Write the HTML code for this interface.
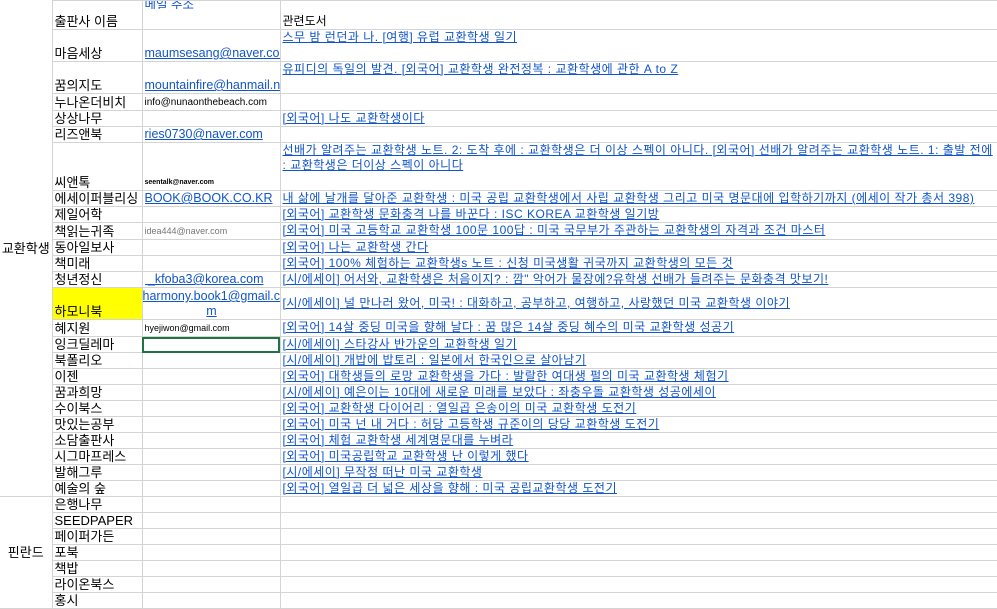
<!DOCTYPE html>
<html><head><meta charset="utf-8">
<style>
body{margin:0;background:#fff;width:997px;height:609px;overflow:hidden;font-family:"Liberation Sans","Noto Sans CJK KR",sans-serif;font-size:12px;color:#000}
table{border-collapse:collapse;table-layout:fixed;position:absolute;left:0;top:0;width:997px}
td{border:1px solid #d4d4d4;padding:0 0 0 2px;line-height:15px;vertical-align:bottom;white-space:nowrap;overflow:hidden}
td.a{border-left:none;text-align:center;vertical-align:middle;font-size:13px;padding:0}
td.b{font-size:13px}
td.d{vertical-align:top;overflow:visible;letter-spacing:0.5px}
.c{width:136px;overflow:hidden;white-space:nowrap}
a{color:#1155cc;text-decoration:underline}
.e{font-size:12.5px}
.s{font-size:10px}
.t{font-size:7px;font-weight:bold}
.g{font-size:9px;color:#777}
tr.r16{height:16px}
</style></head><body>
<table>
<colgroup><col style="width:52px"><col style="width:90px"><col style="width:138px"><col style="width:717px"></colgroup>
<tr style="height:29px"><td class="a" rowspan="25" style="border-top:none">교환학생</td><td class="b">출판사 이름</td><td style="vertical-align:top;line-height:8px"><div class="c"><a class="e">메일 주소</a></div></td><td style="vertical-align:bottom">관련도서</td></tr>
<tr style="height:32px"><td class="b">마음세상</td><td><div class="c"><a class="e">maumsesang@naver.com</a></div></td><td class="d"><a>스무 밤 런던과 나. [여행] 유럽 교환학생 일기</a></td></tr>
<tr style="height:32px"><td class="b">꿈의지도</td><td><div class="c"><a class="e">mountainfire@hanmail.net</a></div></td><td class="d"><a>유피디의 독일의 발견. [외국어] 교환학생 완전정복 : 교환학생에 관한 A to Z</a></td></tr>
<tr class="r16"><td class="b">누나온더비치</td><td><div class="c"><span class="s">info@nunaonthebeach.com</span></div></td><td></td></tr>
<tr class="r16"><td class="b">상상나무</td><td></td><td class="d"><a>[외국어] 나도 교환학생이다</a></td></tr>
<tr class="r16"><td class="b">리즈앤북</td><td><div class="c"><a class="e">ries0730@naver.com</a></div></td><td></td></tr>
<tr style="height:48px"><td class="b">씨앤톡</td><td><div class="c"><span class="t">seentalk@naver.com</span></div></td><td class="d" style="white-space:normal"><a>선배가 알려주는 교환학생 노트. 2: 도착 후에 : 교환학생은 더 이상 스펙이 아니다. [외국어] 선배가 알려주는 교환학생 노트. 1: 출발 전에 : 교환학생은 더이상 스펙이 아니다</a></td></tr>
<tr class="r16"><td class="b">에세이퍼블리싱</td><td><div class="c"><a class="e">BOOK@BOOK.CO.KR</a></div></td><td class="d"><a>내 삶에 날개를 달아준 교환학생 : 미국 공립 교환학생에서 사립 교환학생 그리고 미국 명문대에 입학하기까지 (에세이 작가 총서 398)</a></td></tr>
<tr class="r16"><td class="b">제일어학</td><td></td><td class="d"><a>[외국어] 교환학생 문화충격 나를 바꾼다 : ISC KOREA 교환학생 일기방</a></td></tr>
<tr class="r16"><td class="b">책읽는귀족</td><td><div class="c"><span class="g">idea444@naver.com</span></div></td><td class="d"><a>[외국어] 미국 고등학교 교환학생 100문 100답 : 미국 국무부가 주관하는 교환학생의 자격과 조건 마스터</a></td></tr>
<tr class="r16"><td class="b">동아일보사</td><td></td><td class="d"><a>[외국어] 나는 교환학생 간다</a></td></tr>
<tr class="r16"><td class="b">책미래</td><td></td><td class="d"><a>[외국어] 100% 체험하는 교환학생s 노트 : 신청 미국생활 귀국까지 교환학생의 모든 것</a></td></tr>
<tr class="r16"><td class="b">청년정신</td><td><div class="c"><a class="e">&nbsp;_kfoba3@korea.com</a></div></td><td class="d"><a>[시/에세이] 어서와, 교환학생은 처음이지? : 깜" 악어가 물장에?유학생 선배가 들려주는 문화충격 맛보기!</a></td></tr>
<tr style="height:32px"><td class="b" style="background:#ffff00">하모니북</td><td style="text-align:center;padding:0"><div style="width:138px;overflow:hidden;white-space:nowrap;line-height:15px"><a style="font-size:12.5px">harmony.book1@gmail.co</a><br><a style="font-size:12.5px">m</a></div></td><td class="d" style="vertical-align:middle"><a>[시/에세이] 널 만나러 왔어, 미국! : 대화하고, 공부하고, 여행하고, 사랑했던 미국 교환학생 이야기</a></td></tr>
<tr class="r16"><td class="b">혜지원</td><td><div class="c"><span class="s" style="font-size:9px">hyejiwon@gmail.com</span></div></td><td class="d"><a>[외국어] 14살 중딩 미국을 향해 날다 : 꿈 많은 14살 중딩 혜수의 미국 교환학생 성공기</a></td></tr>
<tr class="r16"><td class="b">잉크딜레마</td><td style="outline:2px solid #217346;outline-offset:-2px"></td><td class="d"><a>[시/에세이] 스타강사 반가운의 교환학생 일기</a></td></tr>
<tr class="r16"><td class="b">북폴리오</td><td></td><td class="d"><a>[시/에세이] 개밥에 밥토리 : 일본에서 한국인으로 살아남기</a></td></tr>
<tr class="r16"><td class="b">이젠</td><td></td><td class="d"><a>[외국어] 대학생들의 로망 교환학생을 가다 : 발랄한 여대생 펄의 미국 교환학생 체험기</a></td></tr>
<tr class="r16"><td class="b">꿈과희망</td><td></td><td class="d"><a>[시/에세이] 예은이는 10대에 새로운 미래를 보았다 : 좌충우돌 교환학생 성공에세이</a></td></tr>
<tr class="r16"><td class="b">수이북스</td><td></td><td class="d"><a>[외국어] 교환학생 다이어리 : 열일곱 은송이의 미국 교환학생 도전기</a></td></tr>
<tr class="r16"><td class="b">맛있는공부</td><td></td><td class="d"><a>[외국어] 미국 넌 내 거다 : 허당 고등학생 규준이의 당당 교환학생 도전기</a></td></tr>
<tr class="r16"><td class="b">소담출판사</td><td></td><td class="d"><a>[외국어] 체험 교환학생 세계명문대를 누벼라</a></td></tr>
<tr class="r16"><td class="b">시그마프레스</td><td></td><td class="d"><a>[외국어] 미국공립학교 교환학생 난 이렇게 했다</a></td></tr>
<tr class="r16"><td class="b">발해그루</td><td></td><td class="d"><a>[시/에세이] 무작정 떠난 미국 교환학생</a></td></tr>
<tr class="r16"><td class="b">예술의 숲</td><td></td><td class="d"><a>[외국어] 열일곱 더 넓은 세상을 향해 : 미국 공립교환학생 도전기</a></td></tr>
<tr class="r16"><td class="a" rowspan="7">핀란드</td><td class="b">은행나무</td><td></td><td></td></tr>
<tr class="r16"><td class="b">SEEDPAPER</td><td></td><td></td></tr>
<tr class="r16"><td class="b">페이퍼가든</td><td></td><td></td></tr>
<tr class="r16"><td class="b">포북</td><td></td><td></td></tr>
<tr class="r16"><td class="b">책밥</td><td></td><td></td></tr>
<tr class="r16"><td class="b">라이온북스</td><td></td><td></td></tr>
<tr class="r16"><td class="b">홍시</td><td></td><td></td></tr>
</table>
</body></html>
